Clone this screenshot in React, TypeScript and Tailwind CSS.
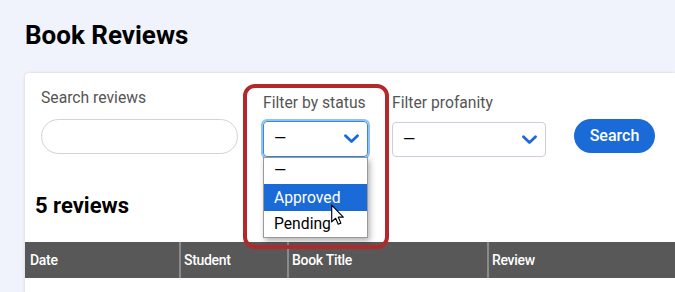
import React from "react";

function Chevron() {
  return (
    <svg className="h-[10px] w-[15px]" viewBox="0 0 15 10" fill="none">
      <path d="M1.5 1.8 7.5 7.6 13.5 1.8" stroke="#1a6ad8" strokeWidth="2.8" strokeLinecap="round" strokeLinejoin="round" />
    </svg>
  );
}

function Cursor() {
  return (
    <svg className="absolute left-[67px] top-[47px] h-[22px] w-[15px]" viewBox="0 0 12 19" fill="none">
      <path
        d="M1 1v14.5l3.4-3.2 2.2 5.2 2.3-1-2.2-5.1H11L1 1z"
        fill="#fff"
        stroke="#000"
        strokeWidth="1"
        strokeLinejoin="round"
      />
    </svg>
  );
}

export default function App() {
  const columns = [
    { label: "Date", width: "w-[154px] pl-[5px]" },
    { label: "Student", width: "w-[108px] pl-[3px] border-l-2 border-[#8a8a8a]" },
    { label: "Book Title", width: "w-[200px] pl-[3px] border-l-2 border-[#8a8a8a]" },
    { label: "Review", width: "flex-1 pl-[3px] border-l-2 border-[#8a8a8a]" },
  ];

  return (
    <div className="min-h-[292px] overflow-hidden bg-[#f0f3fb] pl-[25px] pt-[18px] font-['Roboto',sans-serif]">
      <h1 className="text-[26px] font-bold leading-[34px] text-black">Book Reviews</h1>

      <div className="mt-[21px] rounded-tl-[4px] bg-white pt-[15px] shadow-[0_0_3px_rgba(0,0,0,0.15)]">
        <div className="flex items-start pl-[16px]">
          <div className="w-[197px]">
            <label className="block text-[15.7px] leading-[20px] text-[#555]">Search reviews</label>
            <input className="mt-[11px] h-[35px] w-full rounded-full border border-[#cfd3dc] px-3 outline-none" />
          </div>

          <div className="relative ml-[25px] mt-[5px] w-[105px]">
            <label className="block whitespace-nowrap text-[15.7px] leading-[20px] text-[#555]">Filter by status</label>
            <div className="mt-[8px] flex h-[36px] items-center justify-between rounded-[4px] border border-[#3a86e0] pl-[10px] pr-[8px] shadow-[0_0_0_2px_#8ec2f3]">
              <span className="text-[15.7px] text-black">—</span>
              <Chevron />
            </div>
            <ul className="absolute left-0 top-[64px] z-10 w-[105px] border border-[#999] bg-white text-[15.7px] shadow-[2px_3px_6px_rgba(0,0,0,0.3)]">
              <li className="h-[26px] pl-[10px] leading-[26px] text-black">—</li>
              <li className="h-[27px] bg-[#1a6ad8] pl-[10px] leading-[27px] text-white">Approved</li>
              <li className="h-[26px] pl-[10px] leading-[26px] text-black">Pending</li>
            </ul>
            <div className="pointer-events-none absolute left-[-20px] top-[-9px] z-20 h-[165px] w-[146px] rounded-[12px] border-[4px] border-[#b3282b]" />
            <div className="absolute left-0 top-[64px] z-30 h-[81px] w-[105px]">
              <Cursor />
            </div>
          </div>

          <div className="ml-[24px] mt-[5px] w-[154px]">
            <label className="block text-[15.7px] leading-[20px] text-[#555]">Filter profanity</label>
            <div className="mt-[9px] flex h-[35px] items-center justify-between rounded-[4px] border border-[#c9cfdc] pl-[10px] pr-[8px]">
              <span className="text-[15.7px] text-black">—</span>
              <Chevron />
            </div>
          </div>

          <button className="ml-[28px] mt-[31px] h-[34px] w-[81px] rounded-full bg-[#1a6ad8] text-[16px] font-medium text-white">
            Search
          </button>
        </div>

        <h2 className="mt-[35px] pl-[10px] text-[22px] font-bold leading-[28px] text-black">5 reviews</h2>

        <div className="mt-[22px] flex h-[36px] bg-[#585858] text-[14px] font-medium tracking-[-0.3px] text-white">
          {columns.map((col) => (
            <div className={`${col.width} flex items-center`} key={col.label}>
              {col.label}
            </div>
          ))}
        </div>
        <div className="h-[20px] bg-white" />
      </div>
    </div>
  );
}
